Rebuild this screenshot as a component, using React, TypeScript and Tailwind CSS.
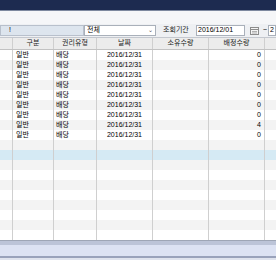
const FONT = { fontFamily: '"Liberation Sans", "Noto Sans CJK KR", sans-serif' };

interface Row {
    kind: string;
    type: string;
    date: string;
    own: string;
    alloc: string;
}

const rows: Row[] = Array.from({ length: 9 }, (_, i) => ({
    kind: '일반',
    type: '배당',
    date: '2016/12/31',
    own: '',
    alloc: i === 7 ? '4' : '0',
}));

const TOTAL_ROWS = 19;
const SELECTED = 10;

const cols = 'grid grid-cols-[13px_41px_43px_56px_56px_56px_11px]';
const cell = 'border-r border-[#cfcfcf] h-full flex items-center overflow-hidden whitespace-nowrap';

function CalendarIcon() {
    return (
        <svg width="9" height="8" viewBox="0 0 9 8" className="shrink-0">
            <rect x="0.5" y="0.5" width="8" height="7" fill="#f4f4f4" stroke="#8c8c8c" />
            <line x1="0.5" y1="2.5" x2="8.5" y2="2.5" stroke="#8c8c8c" />
            <line x1="2" y1="4.5" x2="7" y2="4.5" stroke="#b0b0b0" />
            <line x1="2" y1="6" x2="7" y2="6" stroke="#b0b0b0" />
        </svg>
    );
}

export default function App() {
    return (
        <div className="w-[276px] h-[260px] overflow-hidden bg-white flex flex-col text-[7px] text-black" style={FONT}>
            {/* title bar */}
            <div className="h-[10px] bg-[#1d2b50] shrink-0" />
            <div className="h-px bg-[#7d889f] shrink-0" />
            <div className="h-[13px] bg-[#f5f6f8] shrink-0" />

            {/* filter row */}
            <div className="h-[14px] shrink-0 flex items-center bg-[#eef0f3] border-b border-[#c4c8cf]">
                <div className="w-[84px] h-[11px] bg-[#dde5ee] border border-[#b8c0cc] flex items-center pl-[8px]">!</div>
                <div className="w-[72px] h-[11px] bg-white border border-[#a9b0ba] flex items-center pl-[2px] justify-between pr-[2px]">
                    <span>전체</span>
                    <span className="text-[6px] text-[#555]">⌄</span>
                </div>
                <div className="w-[40px] h-[11px] flex items-center pl-[7px] text-[#222]">조회기간</div>
                <div className="w-[49px] h-[11px] bg-white border border-[#a9b0ba] flex items-center pl-[1px]">2016/12/01</div>
                <div className="w-[18px] flex items-center justify-center">
                    <CalendarIcon />
                </div>
                <span className="w-[5px]">~</span>
                <div className="flex-1 h-[11px] bg-white border border-[#a9b0ba] flex items-center pl-[1px] overflow-hidden">2</div>
            </div>

            {/* grid */}
            <div className="flex-1 flex flex-col">
                <div className={`${cols} h-[12px] bg-[#ececec] border-b border-[#c2c2c2] text-[#222]`}>
                    <div className={`${cell} border-[#c2c2c2]`} />
                    <div className={`${cell} border-[#c2c2c2] justify-center`}>구분</div>
                    <div className={`${cell} border-[#c2c2c2] justify-center`}>권리유형</div>
                    <div className={`${cell} border-[#c2c2c2] justify-center`}>날짜</div>
                    <div className={`${cell} border-[#c2c2c2] justify-center`}>소유수량</div>
                    <div className={`${cell} border-[#c2c2c2] justify-center`}>배정수량</div>
                    <div />
                </div>
                {Array.from({ length: TOTAL_ROWS }, (_, i) => {
                    const r = rows[i];
                    const bg = i === SELECTED ? 'bg-[#d5eaf4]' : i % 2 === 1 ? 'bg-[#f3f3f3]' : 'bg-white';
                    return (
                        <div key={i} className={`${cols} h-[10px] ${bg}`}>
                            <div className={cell} />
                            <div className={`${cell} pl-[3px]`}>{r?.kind}</div>
                            <div className={`${cell} pl-[2px]`}>{r?.type}</div>
                            <div className={`${cell} justify-center`}>{r?.date}</div>
                            <div className={`${cell} justify-end pr-[3px]`}>{r?.own}</div>
                            <div className={`${cell} justify-end pr-[3px]`}>{r?.alloc}</div>
                            <div />
                        </div>
                    );
                })}
            </div>

            {/* bottom bar */}
            <div className="h-px bg-[#9ea6b6] shrink-0" />
            <div className="h-[4px] bg-[#bcc4d8] shrink-0" />
            <div className="h-[11px] bg-[#dce2f3] shrink-0" />
            <div className="h-[2px] bg-[#99a2bb] shrink-0" />
            <div className="h-[2px] bg-[#dfe3ee] shrink-0" />
        </div>
    );
}
